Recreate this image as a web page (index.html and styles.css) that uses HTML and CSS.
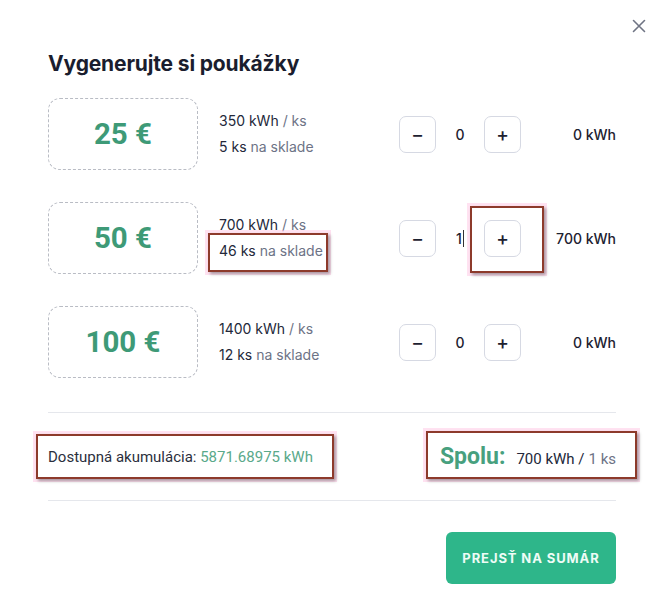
FILE: index.html
```html
<!DOCTYPE html>
<html lang="sk">
<head>
<meta charset="utf-8">
<link rel="stylesheet" href="styles.css">
</head>
<body>
<div class="modal">
  <button class="close" aria-label="Zavrieť">
    <svg width="14" height="14" viewBox="0 0 14 14"><path d="M1.5 1.5L12.5 12.5M12.5 1.5L1.5 12.5" stroke="#6f7484" stroke-width="1.6" stroke-linecap="round"/></svg>
  </button>
  <h1 class="title">Vygenerujte si poukážky</h1>

  <div class="rows">
    <div class="row">
      <div class="voucher">25 €</div>
      <div class="info">
        <div><span class="dark">350 kWh</span> <span class="muted">/ ks</span></div>
        <div><span class="dark">5 ks</span> <span class="muted">na sklade</span></div>
      </div>
      <div class="stepper">
        <button class="step">−</button>
        <span class="qty">0</span>
        <button class="step">+</button>
      </div>
      <div class="total">0 kWh</div>
    </div>

    <div class="row">
      <div class="voucher">50 €</div>
      <div class="info">
        <div><span class="dark">700 kWh</span> <span class="muted">/ ks</span></div>
        <div><span class="dark">46 ks</span> <span class="muted">na sklade</span></div>
      </div>
      <div class="stepper">
        <button class="step">−</button>
        <span class="qty">1<span class="caret"></span></span>
        <button class="step">+</button>
      </div>
      <div class="total">700 kWh</div>
    </div>

    <div class="row">
      <div class="voucher">100 €</div>
      <div class="info">
        <div><span class="dark">1400 kWh</span> <span class="muted">/ ks</span></div>
        <div><span class="dark">12 ks</span> <span class="muted">na sklade</span></div>
      </div>
      <div class="stepper">
        <button class="step">−</button>
        <span class="qty">0</span>
        <button class="step">+</button>
      </div>
      <div class="total">0 kWh</div>
    </div>
  </div>

  <div class="summary">
    <div class="avail">Dostupná akumulácia: <span class="green">5871.68975 kWh</span></div>
    <div class="sum"><span class="sum-label">Spolu:</span> <span class="dark">700 kWh /</span> <span class="muted">1 ks</span></div>
  </div>

  <div class="actions">
    <button class="primary">PREJSŤ NA SUMÁR</button>
  </div>

  <div class="mark mark-stock"></div>
  <div class="mark mark-plus"></div>
  <div class="mark mark-avail"></div>
  <div class="mark mark-sum"></div>
</div>
</body>
</html>
```

FILE: styles.css
```css
* { box-sizing: border-box; }
html, body { margin: 0; padding: 0; background: #fff; }
body { font-family: "Inter", "Roboto", sans-serif; color: #1d2130; }

.modal {
  position: relative;
  width: 670px;
  height: 615px;
  padding: 0 54px 0 48px;
}

.close {
  position: absolute;
  top: 19px;
  left: 632px;
  width: 14px;
  height: 14px;
  padding: 0;
  border: 0;
  background: none;
  display: flex;
}

.title {
  margin: 0;
  padding-top: 50px;
  font-size: 21px;
  line-height: 28px;
  font-weight: 700;
  color: #1a1d2e;
  letter-spacing: -0.15px;
}

.rows {
  margin-top: 20px;
  display: flex;
  flex-direction: column;
  gap: 32px;
}

.row {
  display: grid;
  grid-template-columns: 150px 201px 122px 95px;
  align-items: center;
  height: 72px;
}

.voucher {
  height: 72px;
  border: 1.5px dashed #b9bcc4;
  border-radius: 12px;
  display: flex;
  align-items: center;
  justify-content: center;
  font-family: "Roboto", sans-serif;
  font-weight: 700;
  font-size: 29.5px;
  color: #3e9a77;
}

.info {
  padding-left: 21px;
  font-size: 14px;
  line-height: 26px;
}
.dark { color: #23283a; }
.muted { color: #6d7386; }

.stepper {
  display: flex;
  align-items: center;
}
.step {
  width: 37px;
  height: 37px;
  border: 1.5px solid #d6d9e3;
  border-radius: 7px;
  background: #fff;
  font-family: "Inter", sans-serif;
  font-size: 19px;
  font-weight: 500;
  color: #1d2130;
  padding: 0;
  display: flex;
  align-items: center;
  justify-content: center;
}
.qty {
  width: 48px;
  text-align: center;
  font-size: 14px;
  font-weight: 500;
  color: #1d2130;
  position: relative;
}
.caret {
  display: inline-block;
  width: 1px;
  height: 17px;
  background: #333;
  vertical-align: -3px;
  margin-left: 1px;
}

.total {
  text-align: right;
  font-size: 14px;
  font-weight: 500;
  color: #1d2130;
}

.summary {
  margin-top: 34px;
  border-top: 1px solid #e5e7ec;
  border-bottom: 1px solid #e5e7ec;
  height: 89px;
  display: flex;
  align-items: center;
  justify-content: space-between;
}
.avail {
  font-family: "Roboto", sans-serif;
  font-size: 15px;
  color: #2b2f3d;
}
.green { color: #5aa98a; }
.sum {
  font-family: "Roboto", sans-serif;
  font-size: 15px;
  display: flex;
  align-items: baseline;
  gap: 4px;
}
.sum-label {
  font-size: 23px;
  font-weight: 700;
  color: #47a07e;
  margin-right: 7px;
}

.actions {
  display: flex;
  justify-content: flex-end;
  margin-top: 31px;
}
.primary {
  width: 170px;
  height: 52px;
  border: 0;
  border-radius: 6px;
  background: #2eb68a;
  color: #eefcf6;
  font-family: "Inter", sans-serif;
  font-weight: 700;
  font-size: 13px;
  letter-spacing: 0.9px;
}

.mark {
  position: absolute;
  border: 2px solid #8d3a2b;
  box-shadow: 2px 2px 3px rgba(0,0,0,0.35), 0 0 0 3px rgba(255,190,225,0.45);
  pointer-events: none;
}
.mark-stock { left: 208px; top: 233px; width: 120px; height: 39px; }
.mark-plus  { left: 470px; top: 206px; width: 74px; height: 67px; }
.mark-avail { left: 36px;  top: 434px; width: 298px; height: 45px; }
.mark-sum   { left: 426px; top: 431px; width: 211px; height: 48px; }
```
